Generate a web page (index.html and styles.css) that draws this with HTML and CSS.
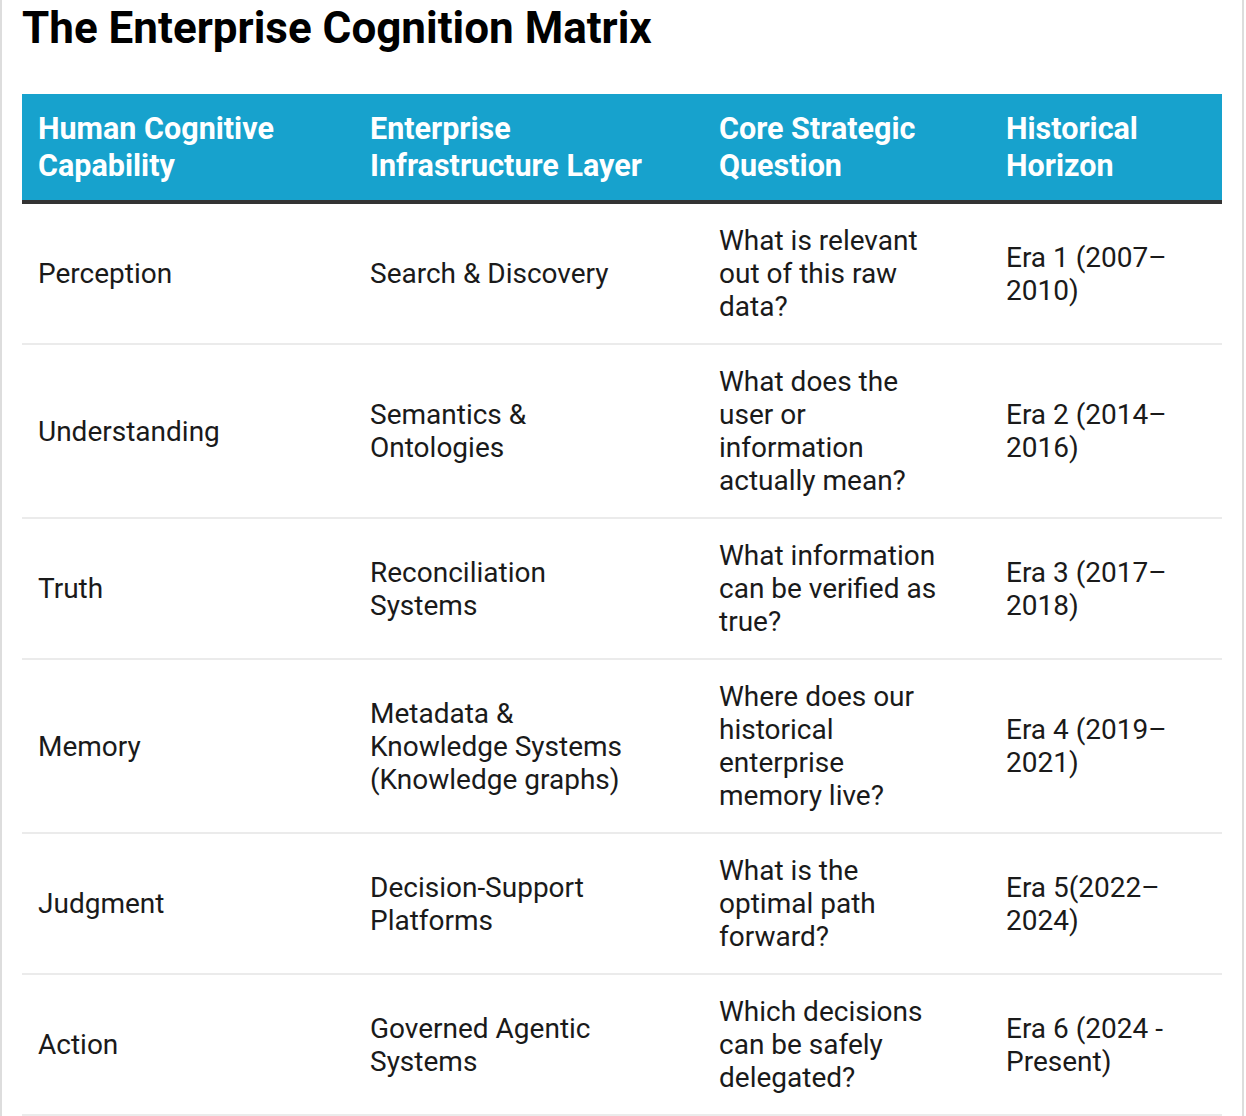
FILE: index.html
```html
<!DOCTYPE html>
<html>
<head>
<meta charset="utf-8">
<link rel="stylesheet" href="styles.css">
</head>
<body>
<div class="page">
  <h1 class="title">The Enterprise Cognition Matrix</h1>
  <table class="matrix">
    <colgroup>
      <col class="c1"><col class="c2"><col class="c3"><col class="c4">
    </colgroup>
    <thead>
      <tr>
        <th>Human Cognitive Capability</th>
        <th>Enterprise Infrastructure Layer</th>
        <th>Core Strategic Question</th>
        <th>Historical Horizon</th>
      </tr>
    </thead>
    <tbody>
      <tr>
        <td>Perception</td>
        <td>Search &amp; Discovery</td>
        <td>What is relevant out of this raw data?</td>
        <td>Era 1 (2007–2010)</td>
      </tr>
      <tr>
        <td>Understanding</td>
        <td>Semantics &amp; Ontologies</td>
        <td>What does the user or information actually mean?</td>
        <td>Era 2 (2014–2016)</td>
      </tr>
      <tr>
        <td>Truth</td>
        <td>Reconciliation Systems</td>
        <td>What information can be verified as true?</td>
        <td>Era 3 (2017–2018)</td>
      </tr>
      <tr>
        <td>Memory</td>
        <td>Metadata &amp; Knowledge Systems (Knowledge graphs)</td>
        <td>Where does our historical enterprise memory live?</td>
        <td>Era 4 (2019–2021)</td>
      </tr>
      <tr>
        <td>Judgment</td>
        <td>Decision-Support Platforms</td>
        <td>What is the optimal path forward?</td>
        <td>Era 5(2022–2024)</td>
      </tr>
      <tr>
        <td>Action</td>
        <td>Governed Agentic Systems</td>
        <td>Which decisions can be safely delegated?</td>
        <td>Era 6 (2024 - Present)</td>
      </tr>
    </tbody>
  </table>
</div>
</body>
</html>
```

FILE: styles.css
```css
html, body {
  margin: 0;
  padding: 0;
  background: #ffffff;
}
body {
  font-family: Roboto, "Liberation Sans", sans-serif;
  color: #1a1a1a;
}
.page {
  width: 1200px;
  padding: 0 20px 20px 20px;
  border-left: 2px solid #dddddd;
  border-right: 2px solid #dddddd;
  min-height: 1116px;
  box-sizing: content-box;
}
.title {
  margin: 0 0 38px 0;
  font-size: 44px;
  line-height: 56px;
  font-weight: 700;
  color: #000000;
}
.matrix {
  width: 1200px;
  border-collapse: collapse;
  table-layout: fixed;
}
.c1 { width: 332px; }
.c2 { width: 349px; }
.c3 { width: 287px; }
.c4 { width: 232px; }
.matrix th {
  background: #17a2cd;
  color: #ffffff;
  text-align: left;
  font-size: 30.5px;
  line-height: 37px;
  font-weight: 700;
  padding: 16px 50px 16px 16px;
  border-bottom: 4px solid #333333;
  vertical-align: middle;
}
.matrix td {
  font-size: 28px;
  line-height: 33px;
  padding: 20px 50px 20px 16px;
  border-bottom: 2px solid #ebebeb;
  vertical-align: middle;
}
```
